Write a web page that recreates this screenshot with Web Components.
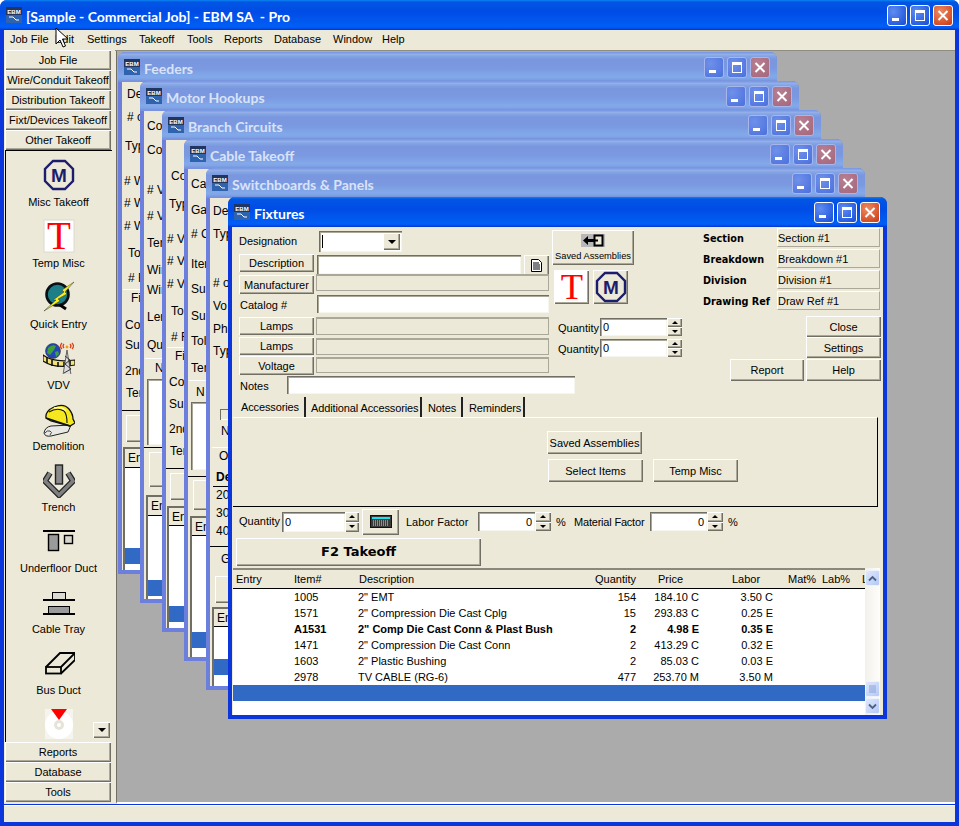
<!DOCTYPE html>
<html><head><meta charset="utf-8"><title>EBM</title>
<style>
html,body{margin:0;padding:0;background:#fff;width:959px;height:826px;overflow:hidden}
body{font:11px "Liberation Sans",Arial,sans-serif;color:#000}
</style></head><body>
<ebm-app></ebm-app>
<script>
const FONT='"Liberation Sans",Arial,sans-serif';
const ACTIVE='linear-gradient(180deg,#0a84f0 0,#0256e4 7%,#004ce6 40%,#0058ee 70%,#005ef6 88%,#0056f2 94%,#003dd7 97%,#003dd7)';
const INACT='linear-gradient(180deg,#7697e7,#7e9ee3 3%,#94afe8 8%,#82a5e4 14%,#7996de 25%,#7b99e1 56%,#82a9e9 81%,#80a5e7 89%,#7b96e1 94%,#7a93df 97%,#7a8fdf)';
function def(name,css,html,extra){
  class C extends HTMLElement{
    connectedCallback(){
      if(this.shadowRoot)return;
      const r=this.attachShadow({mode:'open'});
      const h=typeof html==='function'?html(this):html;
      r.innerHTML='<style>'+css+'</style>'+h;
      if(extra)extra(this,r);
    }
  }
  customElements.define(name,C);
}
const RAISED='background:#ece9d8;box-shadow:inset 1px 1px #fff,inset -1px -1px #716f64,inset -2px -2px #aca899';
const SUNK='background:#fff;box-shadow:inset 1px 1px #716f64,inset 2px 2px #aca899,inset -1px -1px #f6f5ee';

def('ebm-icon',':host{display:block;width:16px;height:16px;flex:none}svg{display:block}',
`<svg width="16" height="16" viewBox="0 0 16 16"><rect width="16" height="16" fill="#20355f"/><rect y="8" width="16" height="8" fill="#2f63ad"/><text x="8" y="6.6" text-anchor="middle" font-family="Liberation Sans" font-weight="700" font-size="6" fill="#fff">EBM</text><path d="M3 10l4 0 3 3 3 0" fill="none" stroke="#fff" stroke-width="1"/></svg>`);

def('xp-cap',`:host{display:block;width:20px;height:21px;box-sizing:border-box;flex:none;border-radius:3px;border:1px solid var(--cb);background:var(--cf)}
svg{display:block}`,t=>{
 const k=t.getAttribute('k');
 const g=k==='min'?'<rect x="4" y="12" width="7" height="3" fill="#fff"/>':
  k==='max'?'<rect x="4.5" y="4.5" width="9" height="10" fill="none" stroke="#fff"/><rect x="4" y="4" width="10" height="3" fill="#fff"/>':
  '<path d="M4.500 5l9 9M13.500 5l-9 9" stroke="#fff" stroke-width="2" fill="none"/>';
 return `<svg width="18" height="19" viewBox="0 0 18 19">${g}</svg>`;
},(t)=>{
 const k=t.getAttribute('k'),a=t.hasAttribute('active');
 if(k==='close'){t.style.setProperty('--cf',a?'radial-gradient(circle at 35% 30%,#ec8a62,#d6512a 70%,#c13c18)':'radial-gradient(circle at 35% 30%,#b87f91,#a4667c)');}
 else{t.style.setProperty('--cf',a?'radial-gradient(circle at 30% 30%,#5f8cf0,#2a5fe0 70%,#1e4cc8)':'radial-gradient(circle at 30% 30%,#6f90ea,#4a70dc)');}
 t.style.setProperty('--cb',a?'#fff':'#a7b6ec');
});

def('xp-titlebar',`:host{display:flex;align-items:center;height:30px;box-sizing:border-box;padding:0 7px 0 2px;flex:none}
.t{flex:1;margin-left:4px;font:700 14px Lato,${FONT};white-space:pre;color:var(--tc,#fff);padding-top:2px}
.c{display:flex;gap:3px}`,
t=>{const a=t.hasAttribute('active')?'active':'';return `<ebm-icon></ebm-icon><div class="t">${t.getAttribute('text')}</div><div class="c"><xp-cap k="min" ${a}></xp-cap><xp-cap k="max" ${a}></xp-cap><xp-cap k="close" ${a}></xp-cap></div>`});

def('xp-window',`:host{position:absolute;display:flex;flex-direction:column;width:659px;height:522px;box-sizing:border-box;
 border-radius:7px 7px 0 0;overflow:hidden;background:var(--wb);padding:0 4px 4px}
.b{flex:1;background:#ece9d8;overflow:hidden;display:flex;flex-direction:column;min-height:0}
xp-titlebar{margin:0 -4px;padding-left:6px;background:var(--wt)}`,
t=>{const a=t.hasAttribute('active');
 t.style.setProperty('--wb',a?'#0a36dc':'#6c7fdc');t.style.setProperty('--wt',a?ACTIVE:INACT);
 t.style.setProperty('--tc',a?'#fff':'#d9e3f8');
 return `<xp-titlebar text="${t.getAttribute('text')}" ${a?'active':''}></xp-titlebar><div class="b"><slot></slot></div>`});

def('xp-btn',`:host{display:inline-flex;align-items:center;justify-content:center;box-sizing:border-box;flex:none;${RAISED};font:11px ${FONT};white-space:nowrap;color:#000}`,'<slot></slot>');
def('xp-field',`:host{display:flex;align-items:center;box-sizing:border-box;flex:none;padding:0 3px;font:11px ${FONT};white-space:nowrap;${SUNK}}`,'<slot></slot>');
def('xp-off',`:host{display:block;box-sizing:border-box;flex:none;background:#ece9d8;border:1px solid #aca899;border-top:2px solid #aca899}`,'');
def('xp-ro',`:host{display:flex;align-items:center;box-sizing:border-box;flex:none;padding:0;font:11px ${FONT};white-space:nowrap;background:#ece9d8;border-top:1px solid #fff;border-left:1px solid #fff;border-right:1px solid #aca899;border-bottom:1px solid #aca899}`,'<slot></slot>');

def('xp-spin',`:host{display:flex;flex-direction:column;flex:none;width:15px;height:var(--h,18px)}
.s{flex:1;${RAISED};display:flex;align-items:center;justify-content:center}
i{display:block;width:0;height:0;border-left:3px solid transparent;border-right:3px solid transparent}
.u{border-bottom:3px solid #000}.d{border-top:3px solid #000}`,
`<div class="s"><i class="u"></i></div><div class="s"><i class="d"></i></div>`);

def('xp-combo',`:host{display:flex;box-sizing:border-box;align-items:center;flex:none;padding:2px;width:83px;height:21px;${SUNK}}
.c{width:1px;height:13px;background:#000;margin-left:1px}
.a{margin-left:auto;width:17px;height:17px;${RAISED};display:flex;align-items:center;justify-content:center}
i{width:0;height:0;border-left:4px solid transparent;border-right:4px solid transparent;border-top:4px solid #000}`,
`<div class="c"></div><div class="a"><i></i></div>`);

const MICON=(s)=>`<svg width="${s}" height="${s}" viewBox="0 0 32 32"><polygon points="10,2 22,2 30,10 30,22 22,30 10,30 2,22 2,10" fill="none" stroke="#1d1d6e" stroke-width="2.4"/><text x="16" y="22.5" text-anchor="middle" font-family="Liberation Sans" font-weight="700" font-size="19" fill="#1d1d6e">M</text></svg>`;
const TICON=(s)=>`<svg style="overflow:visible" width="${s}" height="${s}" viewBox="0 0 32 32"><text x="16" y="29" text-anchor="middle" font-family="Liberation Serif" font-weight="400" font-size="39" fill="#f00">T</text></svg>`;

const ICONS={
m:MICON(32),
t:`<svg style="overflow:visible" width="32" height="32" viewBox="0 0 32 32"><rect x="1" y="0" width="30" height="32" fill="#fff" stroke="#dcdad0"/><text x="16" y="29" text-anchor="middle" font-family="Liberation Serif" font-size="39" fill="#f00">T</text></svg>`,
q:`<svg width="32" height="32" viewBox="0 0 32 32"><circle cx="14.5" cy="13.5" r="11" fill="#1c7f88" stroke="#0a0f14" stroke-width="2.6"/><path d="M17 24l6 4" stroke="#000" stroke-width="3"/><polygon points="31,1 19,9 21,11 10,19 13,19 1,30 17,20 15,18 24,13 22,11" fill="#f7ec1e" stroke="#333" stroke-width=".5"/></svg>`,
v:`<svg width="32" height="32" viewBox="0 0 32 32"><circle cx="10" cy="9" r="7.500" fill="#2246b8" stroke="#333" stroke-width=".6"/><path d="M5 6q4-4 8-2l-2 4-4 5-3-2zM12 10l3-1 1 3-3 3z" fill="#3fa03a"/><path d="M0 13q10 8 32 5v5q-20 4-32-4z" fill="#f1e27a" stroke="#111" stroke-width="1.200"/><path d="M4 15v6M9 18v6M15 20v5M21 20v5M27 19v5" stroke="#111" stroke-width="1.600"/><path d="M24 8l-4 25h8z" fill="#ddd" stroke="#444" stroke-width=".8"/><path d="M22 14l5 4-5 4 6 5-7 4" fill="none" stroke="#333"/><path d="M19 7q-3-3 0-6M29 7q3-3 0-6M21 6q-2-2 0-4M27 6q2-2 0-4" fill="none" stroke="#e33810" stroke-width="1.200"/><circle cx="24" cy="5" r="1.400" fill="#f2a000"/></svg>`,
d:`<svg width="32" height="34" viewBox="0 0 32 34"><path d="M1 30q1-6 7-7l20-1-3 7-17 4q-6 1-7-3z" fill="#e8e8e4" stroke="#222"/><path d="M2 30q2-3 5-2t0 4" fill="none" stroke="#444"/><path d="M3 15Q2 8 11 4q10-4 15 2 4 5 4 10l2 4-5 3-19-5z" fill="#f6e81f" stroke="#111" stroke-width="1.300"/><path d="M6 9q8-5 15-1 3 3 3 12" fill="none" stroke="#111" stroke-width="1.100"/><path d="M11 5q8-2 12 3" fill="none" stroke="#fffbb0" stroke-width="1.500"/><path d="M3 15l24 8" stroke="#111" stroke-width="1.500"/></svg>`,
tr:`<svg width="32" height="34" viewBox="0 0 32 34"><path d="M7 9L2 17 16 31 30 17 25 9" fill="none" stroke="#222" stroke-width="6"/><path d="M7 9L2 17 16 31 30 17 25 9" fill="none" stroke="#808080" stroke-width="3.400"/><rect x="12.500" y="1" width="7" height="19" fill="#8a8a8a" stroke="#222" stroke-width="1.400"/></svg>`,
u:`<svg width="32" height="32" viewBox="0 0 32 32"><rect x="0" y="5" width="32" height="2" fill="#000"/><rect x="5.500" y="9.500" width="10" height="16" fill="#9a9a9a" stroke="#000" stroke-width="1.400"/><rect x="21.500" y="10.500" width="8" height="8" fill="#d8d6cc" stroke="#000" stroke-width="1.400"/></svg>`,
c:`<svg width="32" height="32" viewBox="0 0 32 32"><rect x="9.500" y="6.500" width="13" height="7" fill="#dcdad0" stroke="#000"/><rect x="0" y="13" width="32" height="2" fill="#000"/><rect x="5.500" y="20.500" width="21" height="7" fill="#9a9a9a" stroke="#000"/><rect x="0" y="27" width="32" height="2" fill="#000"/></svg>`,
b:`<svg width="32" height="32" viewBox="0 0 32 32" fill="none" stroke="#000" stroke-width="1.800"><rect x="3" y="20" width="15" height="6.500"/><path d="M3 20L17 6h15L18 20M32 6v7L18 26.500"/></svg>`,
cd:`<svg width="32" height="32" viewBox="0 0 32 32"><rect x="2" y="1" width="28" height="30" fill="#f5f4ee"/><circle cx="16" cy="17" r="14" fill="#fff"/><circle cx="16" cy="17" r="5" fill="#e6e4da"/><circle cx="16" cy="17" r="2" fill="#fff"/><polygon points="8,1 24,1 16,12" fill="#f00"/></svg>`
};

def('side-item',`:host{display:flex;flex-direction:column;align-items:center;height:61px;flex:none;font:11px ${FONT}}
.i{width:32px;height:32px}svg{display:block}.l{margin-top:4px;line-height:14px;height:14px;white-space:nowrap}`,
t=>`<div class="i">${ICONS[t.getAttribute('i')]}</div><div class="l">${t.getAttribute('label')||''}</div>`);

def('ebm-side',`:host{display:flex;flex-direction:column;width:111px;flex:none;padding-left:1px;box-sizing:border-box;background:#ece9d8;font:11px ${FONT};margin-top:-1px}
xp-btn{width:106px;height:20px}
.p{height:592px;width:107px;box-sizing:border-box;border-left:1px solid #000;border-top:1px solid #000;padding-top:8px;display:flex;flex-direction:column;overflow:hidden;position:relative;padding-right:1px}
.dn{position:absolute;right:2px;top:571px;width:17px;height:16px;display:flex;align-items:center;justify-content:center;${RAISED}}
.dn i{width:0;height:0;border-left:4px solid transparent;border-right:4px solid transparent;border-top:4px solid #000}`,
`<xp-btn>Job File</xp-btn><xp-btn>Wire/Conduit Takeoff</xp-btn><xp-btn>Distribution Takeoff</xp-btn><xp-btn>Fixt/Devices Takeoff</xp-btn><xp-btn>Other Takeoff</xp-btn>
<div class="p">
<side-item i="m" label="Misc Takeoff"></side-item><side-item i="t" label="Temp Misc"></side-item><side-item i="q" label="Quick Entry"></side-item><side-item i="v" label="VDV"></side-item><side-item i="d" label="Demolition"></side-item><side-item i="tr" label="Trench"></side-item><side-item i="u" label="Underfloor Duct"></side-item><side-item i="c" label="Cable Tray"></side-item><side-item i="b" label="Bus Duct"></side-item><side-item i="cd"></side-item>
<div class="dn"><i></i></div></div>
<xp-btn>Reports</xp-btn><xp-btn>Database</xp-btn><xp-btn>Tools</xp-btn>`);

def('strip-body',`:host{display:flex;flex-direction:column;height:100%;font:12px ${FONT};overflow:hidden}
.t{height:14px;line-height:14px;white-space:nowrap;flex:none}
.k{height:1px;background:#000;flex:none}.h{height:1px;background:#fff;flex:none}
.b{flex:none;width:60px;${RAISED}}
.s{flex:none;width:60px;${SUNK}}
.c{flex:none;width:12px;height:11px;box-shadow:inset 1px 1px #716f64,inset -1px -1px #fff}
.l{flex:1;min-height:0;display:flex;flex-direction:column;background:#fff;box-shadow:inset 2px 2px #716f64;padding:2px 0 0 2px}
.lh{height:var(--hh);box-sizing:border-box;flex:none;background:#ece9d8;border-bottom:1px solid #000;padding-left:3px;line-height:18px;font-size:12px}
.g{height:16px;background:#316ac5;flex:none}`,
t=>{
 const top=+t.getAttribute('top'),x0=+t.getAttribute('x0');
 const d=JSON.parse(t.getAttribute('data'));
 let y=top,o='';
 for(const r of d){
  const [k,a,b,c]=r;
  if(k==='t'){o+=`<div class="t" style="margin-top:${a-7-y}px;margin-left:${b-x0}px">${c}</div>`;y=a+7;}
  else if(k==='d'){o+=`<div class="t" style="margin-top:${a-7-y}px;margin-left:${b-x0}px;font-weight:700">${c}</div>`;y=a+7;}
  else if(k==='k'||k==='h'){o+=`<div class="${k}" style="margin-top:${a-y}px;margin-left:${b-x0}px"></div>`;y=a+1;}
  else if(k==='b'||k==='s'){o+=`<div class="${k}" style="margin-top:${a-y}px;margin-left:${c-x0}px;height:${b-a}px"></div>`;y=b;}
  else if(k==='c'){o+=`<div class="c" style="margin-top:${a-y}px;margin-left:${b-x0}px"></div>`;y=a+11;}
  else if(k==='l'){const [lt,hl,bt]=[a,b,c];o+=`<div class="l" style="margin-top:${lt-y}px;margin-left:${r[4]-x0}px;--hh:${hl-lt-1}px"><div class="lh">${r[5]}</div><div style="height:${bt-hl-1}px;flex:none"></div><div class="g"></div></div>`;}
 }
 return o;
});

def('take-list',`:host{display:flex;height:147px;flex:none;margin-left:1px;width:647px;font:11px ${FONT}}
.m{width:632px;box-sizing:border-box;padding:2px 0 0 0;background:#fff;box-shadow:inset 0 2px #8a887a;overflow:hidden;display:flex;flex-direction:column}
.r{display:grid;grid-template-columns:61px 64px 220px 58px 63px 74px;height:16px;line-height:16px;white-space:nowrap;flex:none}
.r>*{display:block}.r>:first-child{padding-left:3px}
.n{text-align:right}
.hd{display:flex;height:19px;line-height:18px;box-sizing:border-box;background:#ece9d8;border-bottom:1px solid #000;white-space:nowrap;flex:none;overflow:hidden}
.hd span{display:block;box-sizing:border-box;flex:none}
.bd{font-weight:700}
.sel{background:#316ac5;height:16px;flex:none}
.sb{width:15px;background:linear-gradient(90deg,#f3f1ec,#fdfdfa);display:flex;flex-direction:column;padding:2px 0 1px;box-sizing:border-box}
.sq{height:16px;width:15px;box-sizing:border-box;border:1px solid #eef2fd;border-radius:2px;background:linear-gradient(135deg,#dfe8fd,#b5c9f6);display:flex;align-items:center;justify-content:center;flex:none}
.th{margin-top:auto;margin-bottom:1px}`,
()=>{
 const rows=[['1005','2" EMT','154','184.10 C','3.50 C'],['1571','2" Compression Die Cast Cplg','15','293.83 C','0.25 E'],['A1531','2" Comp Die Cast Conn &amp; Plast Bush','2','4.98 E','0.35 E',1],['1471','2" Compression Die Cast Conn','2','413.29 C','0.32 E'],['1603','2" Plastic Bushing','2','85.03 C','0.03 E'],['2978','TV CABLE (RG-6)','477','253.70 M','3.50 M']];
 const up='<svg width="9" height="7" viewBox="0 0 9 7"><path d="M1 5.500L4.500 2 8 5.500" fill="none" stroke="#4d6185" stroke-width="1.800"/></svg>';
 const dn='<svg width="9" height="7" viewBox="0 0 9 7"><path d="M1 1.500L4.500 5 8 1.500" fill="none" stroke="#4d6185" stroke-width="1.800"/></svg>';
 const gr='<svg width="7" height="8" viewBox="0 0 7 8"><path d="M0 1h7M0 3h7M0 5h7M0 7h7" stroke="#8ba2d8"/></svg>';
 return `<div class="m"><div class="hd"><span style="width:61px;padding-left:3px">Entry</span><span style="width:64px">Item#</span><span style="width:220px;padding-left:1px">Description</span><span style="width:58px;text-align:right">Quantity</span><span style="width:63px;padding-left:22px">Price</span><span style="width:74px;padding-left:33px">Labor</span><span style="width:49px;padding-left:15px">Mat%</span><span style="width:40px">Lab%</span><span>L</span></div>`+
 rows.map(r=>`<div class="r ${r[5]?'bd':''}"><span></span><span>${r[0]}</span><span>${r[1]}</span><span class="n">${r[2]}</span><span class="n">${r[3]}</span><span class="n">${r[4]}</span></div>`).join('')+
 `<div class="sel"></div></div><div class="sb"><div class="sq">${up}</div><div class="sq th">${gr}</div><div class="sq">${dn}</div></div>`;
});

const KB=`<svg width="22" height="13" viewBox="0 0 22 13"><rect x=".5" y=".5" width="21" height="12" fill="#3a3a3a" stroke="#111"/><rect x="2" y="2" width="18" height="2" fill="#18e4f0"/><path d="M3 6h16M3 8h16M3 10h16" stroke="#ddd" stroke-dasharray="1 1"/></svg>`;
const SA=`<svg width="24" height="13" viewBox="0 0 24 13"><rect width="24" height="13" fill="#b8b8b8"/><path d="M7 2L2 6.500 7 11V8h6V5H7z" fill="#000"/><rect x="13.500" y="1.500" width="8" height="10" fill="#ece9d8" stroke="#000" stroke-width="2"/><path d="M13 6.500h4" stroke="#000" stroke-width="2"/></svg>`;
const DOC=`<svg width="11" height="13" viewBox="0 0 11 13"><path d="M.5.500h7l3 3v9h-10z" fill="#fff" stroke="#000"/><path d="M2 4h6M2 6h7M2 8h7M2 10h7" stroke="#000"/></svg>`;

def('fixtures-form',`:host{display:flex;flex-direction:column;height:100%;font:11px ${FONT}}
.up{display:flex;height:149px;flex:none}
.lc{margin-left:7px;width:310px;padding-top:4px;flex:none;display:flex;flex-direction:column}
.row{display:flex;flex:none;align-items:flex-start}
.mc{margin-left:3px;width:130px;flex:none;padding-top:3px;display:flex;flex-direction:column}
.rc{margin-left:21px;width:178px;flex:none;padding-top:1px;display:flex;flex-direction:column}
.sa{flex-direction:column;justify-content:flex-start;padding-top:4px;gap:4px;font-size:9.3px}
.lb{display:block;white-space:nowrap}
.bold{font:700 9.7px "DejaVu Sans",${FONT};width:74px;white-space:nowrap;line-height:19px;padding-top:1px;flex:none}
.notes{display:flex;align-items:center;height:18px;flex:none;margin-left:8px}
.tabs{display:flex;height:20px;margin:3px 0 0 3px;flex:none;align-items:stretch;letter-spacing:-.12px}
.tab{box-sizing:border-box;border-right:2px solid #222;padding:5px 0 0 6px;height:20px;white-space:nowrap;margin-top:0;flex:none}
.tab.a{padding-top:4px}
.panel{height:90px;width:645px;margin-left:1px;box-sizing:border-box;flex:none;border-top:1px solid #fff;border-right:1px solid #000;border-bottom:1px solid #000;padding:13px 0 0 314px;display:flex;flex-direction:column;gap:5px}
.qr{display:flex;align-items:center;height:27px;margin-top:1px;flex:none;margin-left:7px}
.f2{margin:3px 0 0 4px;width:245px;height:28px;font:700 13px "DejaVu Sans",${FONT};padding-bottom:1px}
.sp{height:2px;flex:none}`,
`<div class="up">
 <div class="lc">
  <div class="row" style="height:23px"><span class="lb" style="width:80px;padding-top:4px">Designation</span><xp-combo></xp-combo></div>
  <div class="row" style="height:20px"><xp-btn style="width:75px;height:18px">Description</xp-btn><xp-field style="width:204px;height:19px;margin:1px 0 0 3px"></xp-field><xp-btn style="width:25px;height:21px;margin:1px 0 0 3px">${DOC}</xp-btn></div>
  <div class="row" style="height:21px"><xp-btn style="width:75px;height:19px;margin-top:1px">Manufacturer</xp-btn><xp-off style="width:233px;height:17px;margin-left:2px"></xp-off></div>
  <div class="row" style="height:22px"><span class="lb" style="padding-top:4px;margin-left:1px;flex:none;width:77px">Catalog #</span><xp-field style="width:232px;height:18px"></xp-field></div>
  <div class="row" style="height:20px"><xp-btn style="width:75px;height:18px">Lamps</xp-btn><xp-off style="width:233px;height:18px;margin-left:2px"></xp-off></div>
  <div class="row" style="height:19px"><xp-btn style="width:75px;height:18px">Lamps</xp-btn><xp-off style="width:233px;height:17px;margin-left:2px;margin-top:1px"></xp-off></div>
  <div class="row" style="height:19px"><xp-btn style="width:75px;height:19px">Voltage</xp-btn><xp-off style="width:233px;height:16px;margin-left:2px;margin-top:1px"></xp-off></div>
 </div>
 <div class="mc">
  <xp-btn class="sa" style="width:82px;height:35px">${SA}<span>Saved Assemblies</span></xp-btn>
  <div class="row" style="margin:5px 0 0 2px;gap:4px"><xp-btn style="width:35px;height:34px;background:#fff">${TICON(30)}</xp-btn><xp-btn style="width:35px;height:34px">${MICON(32)}</xp-btn></div>
  <div class="row" style="margin:14px 0 0 6px;align-items:center"><span class="lb" style="width:42px;padding-top:2px">Quantity</span><xp-field style="width:67px;height:18px">0</xp-field><xp-spin style="--h:18px"></xp-spin></div>
  <div class="row" style="margin:3px 0 0 6px;align-items:center"><span class="lb" style="width:42px;padding-top:2px">Quantity</span><xp-field style="width:67px;height:18px">0</xp-field><xp-spin style="--h:18px"></xp-spin></div>
 </div>
 <div class="rc">
  <div class="row" style="height:21px"><span class="bold">Section</span><xp-ro style="width:103px;height:19px">Section #1</xp-ro></div>
  <div class="row" style="height:21px"><span class="bold">Breakdown</span><xp-ro style="width:103px;height:19px">Breakdown #1</xp-ro></div>
  <div class="row" style="height:21px"><span class="bold">Division</span><xp-ro style="width:103px;height:19px">Division #1</xp-ro></div>
  <div class="row" style="height:19px"><span class="bold">Drawing Ref</span><xp-ro style="width:103px;height:19px">Draw Ref #1</xp-ro></div>
  <div class="row" style="margin:6px 0 0 103px"><xp-btn style="width:75px;height:21px">Close</xp-btn></div>
  <div class="row" style="margin-left:103px"><xp-btn style="width:75px;height:21px">Settings</xp-btn></div>
  <div class="row" style="margin:1px 0 0 27px;gap:2px"><xp-btn style="width:74px;height:22px">Report</xp-btn><xp-btn style="width:75px;height:22px">Help</xp-btn></div>
 </div>
</div>
<div class="notes"><span class="lb" style="width:47px;padding-top:2px">Notes</span><xp-field style="width:288px;height:18px"></xp-field></div>
<div class="tabs"><div class="tab a" style="width:71px">Accessories</div><div class="tab" style="width:116px;padding-left:5px">Additional Accessories</div><div class="tab" style="width:41px">Notes</div><div class="tab" style="width:62px">Reminders</div></div>
<div class="panel"><div class="row"><xp-btn style="width:95px;height:23px">Saved Assemblies</xp-btn></div><div class="row" style="gap:10px;margin-left:1px"><xp-btn style="width:95px;height:23px">Select Items</xp-btn><xp-btn style="width:85px;height:23px">Temp Misc</xp-btn></div></div>
<div class="qr"><span class="lb" style="width:43px;padding-bottom:2px">Quantity</span><xp-field style="width:63px;height:20px">0</xp-field><xp-spin style="--h:20px;width:14px"></xp-spin><xp-btn style="width:37px;height:26px;margin:0 7px 0 3px">${KB}</xp-btn><span class="lb" style="width:72px">Labor Factor</span><xp-field style="width:57px;height:19px;justify-content:flex-end">0</xp-field><xp-spin style="--h:19px;width:16px"></xp-spin><span class="lb" style="width:23px;padding-left:5px;box-sizing:border-box">%</span><span class="lb" style="width:76px;letter-spacing:-.2px">Material Factor</span><xp-field style="width:57px;height:19px;justify-content:flex-end">0</xp-field><xp-spin style="--h:19px;width:16px"></xp-spin><span class="lb" style="padding-left:5px">%</span></div>
<xp-btn class="f2">F2 Takeoff</xp-btn>
<div class="sp"></div>
<take-list></take-list>`);

const STRIPS=[
{n:'Feeders',x0:122,top:82,d:[['t',94,127,'Des'],['t',117,127,'# o'],['t',146,125,'Typ'],['t',181,124,'# W'],['t',203,124,'# W'],['t',226,124,'# W'],['t',253,128,'To'],['t',278,128,'# F'],['h',289,123],['t',298,131,'Fi'],['t',325,125,'Cor'],['t',345,125,'Sup'],['t',371,125,'2nd'],['t',393,126,'Ter'],['k',410,122],['b',415,442,126],['l',447,467,548,123,'Ent']]},
{n:'Motor Hookups',x0:144,top:111,d:[['t',126,147,'Cor'],['t',150,147,'Cor'],['t',190,147,'# V'],['t',216,147,'# V'],['t',243,147,'Ter'],['t',270,147,'Wir'],['t',290,147,'Wir'],['t',317,147,'Ler'],['t',345,147,'Qu'],['h',358,145],['t',368,155,'N'],['s',379,445,147],['k',447,144],['b',452,487,149],['l',495,515,580,146,'Em']]},
{n:'Branch Circuits',x0:166,top:140,d:[['t',176,171,'Co'],['t',204,169,'Typ'],['t',239,167,'# V'],['t',261,167,'# V'],['t',284,167,'# V'],['t',311,171,'To'],['t',337,171,'# F'],['h',347,167],['t',356,175,'Fi'],['t',382,169,'Cor'],['t',404,169,'Sup'],['t',429,169,'2nd'],['t',451,170,'Ter'],['k',468,166],['b',473,500,170],['l',506,525,606,167,'Ent']]},
{n:'Cable Takeoff',x0:188,top:169,d:[['t',184,191,'Cal'],['t',210,191,'Ga'],['t',234,191,'# C'],['t',264,191,'Iter'],['t',289,191,'Sup'],['t',316,191,'Sup'],['t',341,191,'Tol'],['t',368,191,'Ter'],['h',380,189],['t',392,196,'N'],['s',402,470,191],['k',476,188],['b',480,510,193],['l',516,535,632,190,'Em']]},
{n:'Switchboards &amp; Panels',x0:210,top:198,d:[['t',211,213,'Des'],['t',234,213,'Typ'],['t',283,213,'# o'],['t',306,213,'Vo'],['t',329,213,'Pha'],['t',351,213,'Typ'],['c',409,220],['t',431,221,'N'],['h',447,212],['t',456,219,'Of'],['d',477,216,'De'],['k',486,213],['t',495,216,'20'],['t',513,216,'30'],['t',531,216,'40'],['k',546,210],['t',559,221,'G'],['b',576,603,215],['l',607,626,659,212,'Em']]}
];

def('ebm-app',`:host{display:flex;flex-direction:column;width:959px;height:826px;box-sizing:border-box;border-radius:7px 7px 0 0;background:#0a36dc;padding:0 4px 4px;position:relative;overflow:hidden;font:11px ${FONT}}
.title{margin:0 -4px;background:${ACTIVE};height:30px;flex:none;display:block}
.title xp-titlebar{padding:0 6px 0 6px;--tc:#fff}
.menu{display:grid;grid-template-columns:45px 32px 52px 48px 37px 50px 59px 49px auto;height:20px;padding-left:6px;background:#ece9d8;align-items:center;flex:none;border-bottom:1px solid #8f8d80;box-sizing:content-box}
.menu span{display:block;white-space:nowrap;padding-bottom:2px}
.work{display:flex;height:753px;flex:none;background:#ece9d8}
.mdi{flex:1;position:relative;background:#ababab;border-left:1px solid #716f64;border-bottom:2px solid #fff;margin-left:1px;overflow:hidden;height:753px;box-sizing:border-box}
.status{flex:1;background:#ece9d8;border-top:1px solid #fff;margin-top:1px}
.cur{position:absolute;left:55px;top:27px;pointer-events:none}`,
()=>{
 const menu=['Job File','Edit','Settings','Takeoff','Tools','Reports','Database','Window','Help'];
 const wins=STRIPS.map((s,i)=>`<xp-window text="${s.n}" style="left:${1+22*i}px;top:${1+29*i}px"><strip-body top="${s.top}" x0="${s.x0}" data='${JSON.stringify(s.d)}'></strip-body></xp-window>`).join('');
 return `<div class="title"><xp-titlebar active text="[Sample - Commercial Job] - EBM SA  - Pro"></xp-titlebar></div>
<div class="menu">${menu.map(m=>`<span>${m}</span>`).join('')}</div>
<div class="work"><ebm-side></ebm-side><div class="mdi">${wins}<xp-window active text="Fixtures" style="left:111px;top:146px"><fixtures-form></fixtures-form></xp-window></div></div>
<div class="status"></div>
<svg class="cur" width="13" height="21" viewBox="0 0 13 21"><path d="M1 1v16l4-4 3 7 2.500-1-3-7h5.500z" fill="#fff" stroke="#000"/></svg>`;
});
</script>
</body></html>
